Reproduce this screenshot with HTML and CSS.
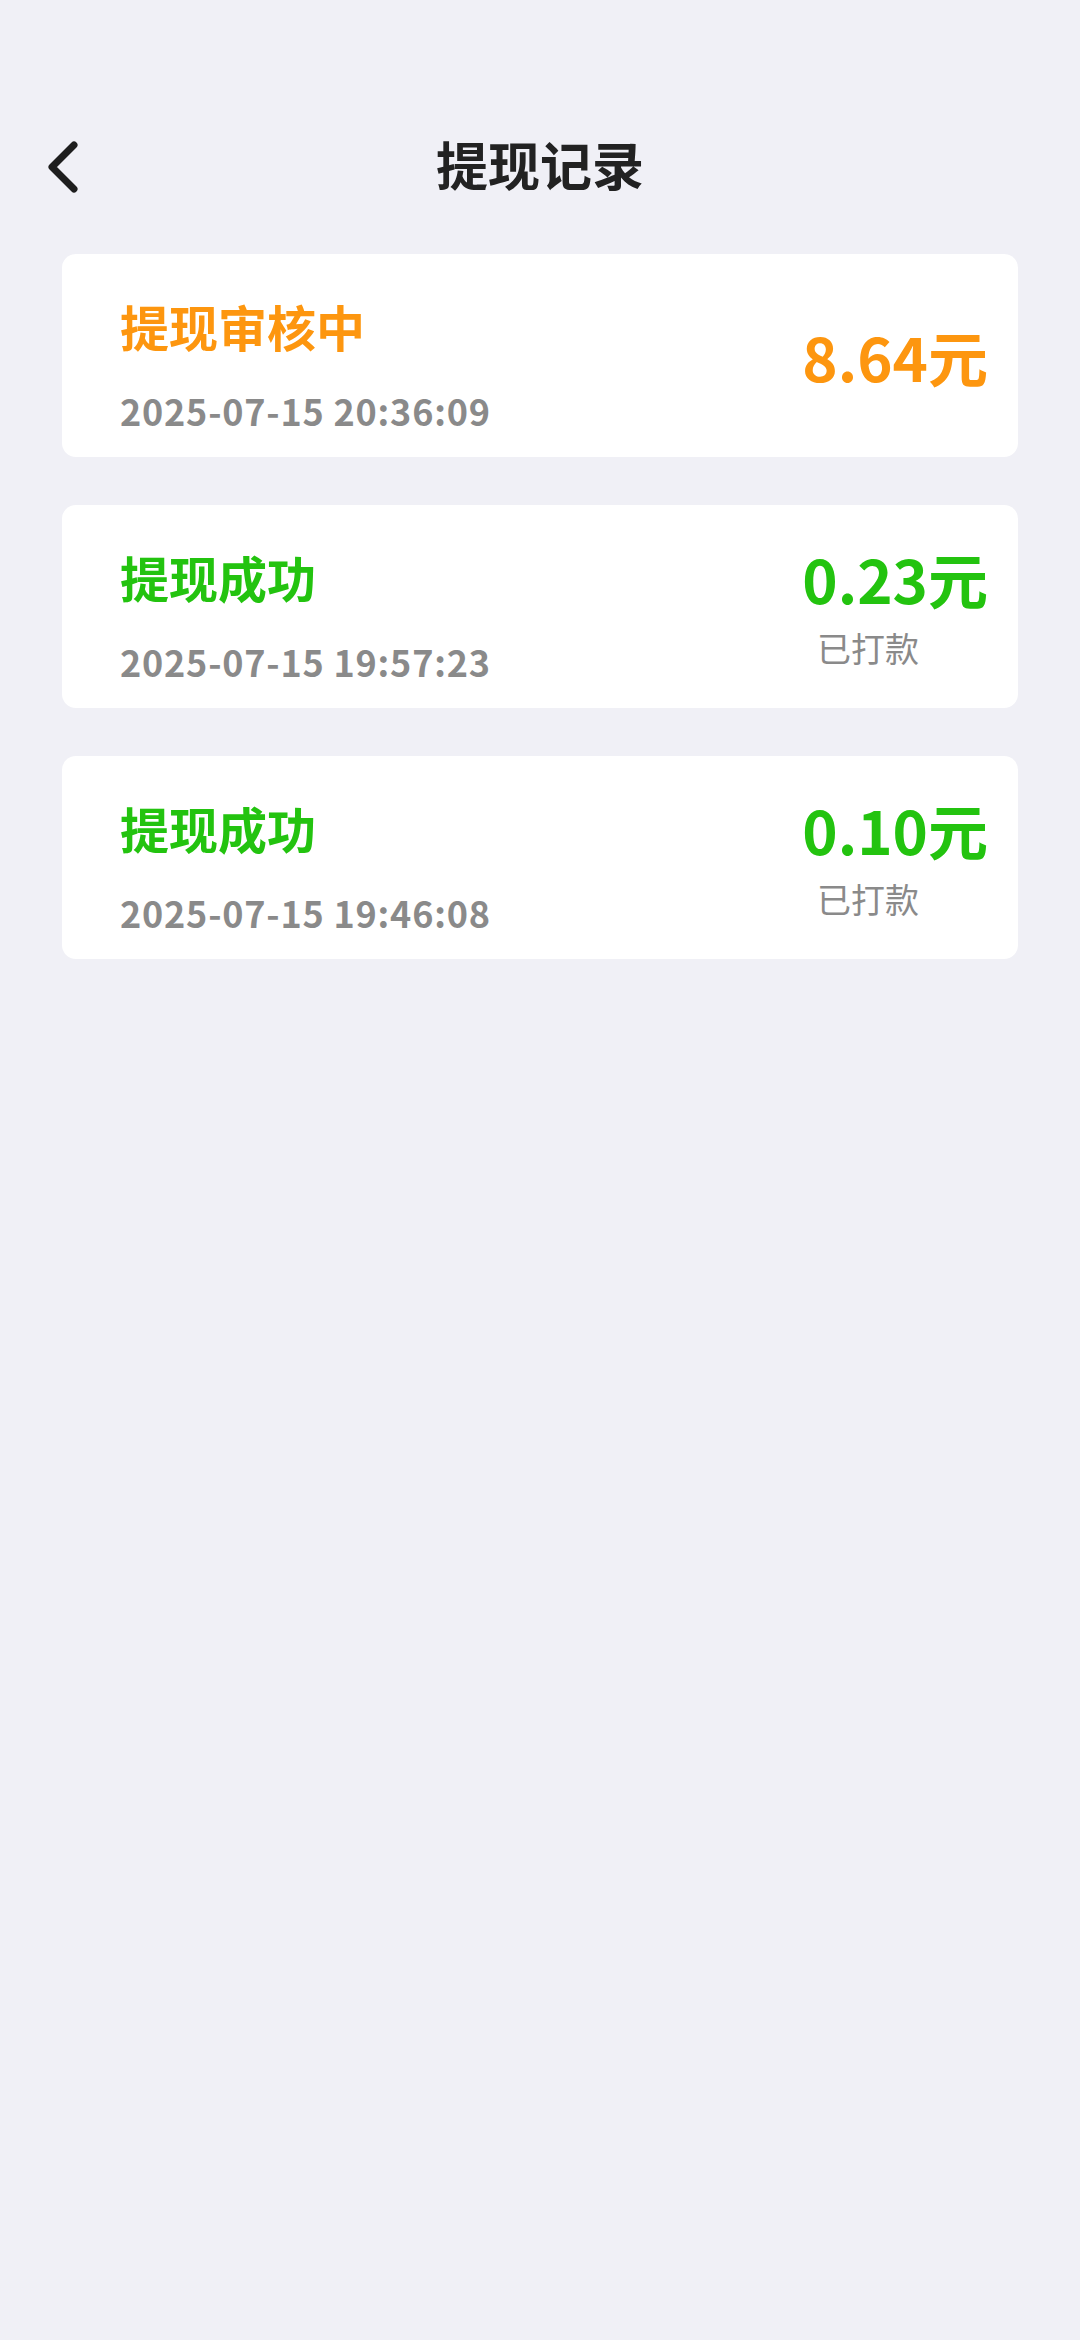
FILE: index.html
```html
<!DOCTYPE html>
<html lang="zh-CN">

<head>
    <meta charset="UTF-8">
    <meta name="viewport" content="width=device-width, initial-scale=1.0">
    <title>提现记录</title>

    <link rel="stylesheet" href="styles.css">
</head>

<body>
    <div class="header">
        <button class="back_btn">
            <svg width="40" height="56" viewBox="0 0 40 56">
                <path d="M32 6 L10 28 L32 50" fill="none" stroke="#1e1e1e" stroke-width="7"
                    stroke-linecap="round" stroke-linejoin="round"></path>
            </svg>
        </button>
        <h1 class="title">提现记录</h1>
        <div></div>
    </div>

    <div class="record_list">
        <div class="record_card">
            <div class="record_info">
                <div class="record_status pending">提现审核中</div>
                <div class="record_time">2025-07-15 20:36:09</div>
            </div>
            <div class="record_amount">
                <div class="amount pending">8.64元</div>
            </div>
        </div>

        <div class="record_card">
            <div class="record_info">
                <div class="record_status success">提现成功</div>
                <div class="record_time">2025-07-15 19:57:23</div>
            </div>
            <div class="record_amount">
                <div class="amount success">0.23元</div>
                <div class="amount_note">已打款</div>
            </div>
        </div>

        <div class="record_card">
            <div class="record_info">
                <div class="record_status success">提现成功</div>
                <div class="record_time">2025-07-15 19:46:08</div>
            </div>
            <div class="record_amount">
                <div class="amount success">0.10元</div>
                <div class="amount_note">已打款</div>
            </div>
        </div>
    </div>
</body>

</html>
```

FILE: styles.css
```css
* {
    margin: 0;
    padding: 0;
    box-sizing: border-box;
}

body {
    width: 100%;
    min-height: 100vh;
    background-color: #f0f0f6;
    font-family: "Noto Sans CJK SC", "Noto Sans", sans-serif;
}

.header {
    display: grid;
    grid-template-columns: 1fr auto 1fr;
    align-items: center;
    height: 100px;
    margin-top: 114px;
    padding: 0 42px;
}

.back_btn {
    width: 40px;
    height: 56px;
    margin-top: 6px;
    border: none;
    outline: none;
    background: none;
    cursor: pointer;
    justify-self: start;
    display: flex;
}

.title {
    font-size: 52px;
    line-height: 1;
    font-weight: 700;
    color: #222;
}

.record_list {
    display: flex;
    flex-direction: column;
    gap: 48px;
    margin: 40px 62px 0;
}

.record_card {
    height: 203px;
    background-color: #fff;
    border-radius: 14px;
    display: flex;
    align-items: center;
    justify-content: space-between;
    padding: 0 30px 0 58px;
}

.record_info {
    display: flex;
    flex-direction: column;
    gap: 42px;
    padding-top: 18px;
}

.record_status {
    font-size: 49px;
    line-height: 1;
    font-weight: 700;
}

.record_time {
    font-size: 36px;
    line-height: 1;
    font-weight: 700;
    letter-spacing: 0.8px;
    color: #8a8a8a;
}

.pending {
    color: #fd960f;
}

.success {
    color: #23c30f;
}

.record_amount {
    display: flex;
    flex-direction: column;
    align-items: flex-end;
    gap: 23px;
}

.amount {
    font-size: 60px;
    line-height: 1;
    font-weight: 700;
}

.amount_note {
    font-size: 34px;
    line-height: 1;
    color: #8a8a8a;
    margin-right: 69px;
}
```
